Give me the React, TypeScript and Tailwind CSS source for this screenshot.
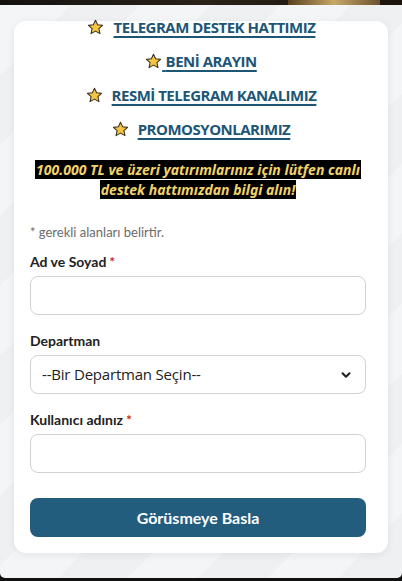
import { ChevronDown } from "lucide-react";

function Star() {
  return (
    <svg className="w-[17px] h-[17px] inline-block align-[-3px]" viewBox="0 0 24 24">
      <path
        d="M12 1.8l3 6.4 7 .8-5.2 4.7 1.5 7L12 17.1l-6.3 3.6 1.5-7L2 9l7-.8z"
        fill="#f6c443"
        stroke="#3a3222"
        strokeWidth={1.5}
        strokeLinejoin="round"
      />
    </svg>
  );
}

const links = [
  { label: "TELEGRAM DESTEK HATTIMIZ", gap: "mr-[10px]", underlineStar: false },
  { label: "BENİ ARAYIN", gap: "", underlineStar: true },
  { label: "RESMİ TELEGRAM KANALIMIZ", gap: "mr-[9px]", underlineStar: false },
  { label: "PROMOSYONLARIMIZ", gap: "mr-[9px]", underlineStar: false },
];

const linkCls =
  "text-[15px] font-bold tracking-[-0.5px] text-[#1d5675] underline underline-offset-[3px] decoration-[1.5px] leading-[20px] cursor-pointer font-['Open_Sans',sans-serif]";

function Field({ label, required }: { label: string; required?: boolean }) {
  return (
    <div className="flex flex-col">
      <label className="text-[14px] font-bold text-[#222] leading-[20px] mb-[4px]">
        {label}
        {required && <span className="text-[#c0302b] ml-[3px]">*</span>}
      </label>
      <input
        type="text"
        className="h-[39px] w-full rounded-[8px] border border-[#d2d2d2] bg-white px-3 outline-none"
      />
    </div>
  );
}

export default function App() {
  return (
    <div className="w-full h-[581px] bg-[#111] overflow-hidden font-['Lato',sans-serif]">
      <div className="h-[5px] bg-gradient-to-r from-[#141210] via-[#2a2219] to-[#1a140c] flex justify-end">
        <div className="w-[92px] h-full mr-[22px] bg-gradient-to-r from-[#5a4220] via-[#c9a866] to-[#6b5230]" />
      </div>
      <div className="h-[573px] rounded-b-[5px] bg-[#f1f2f3] bg-[linear-gradient(135deg,#f4f5f6_25%,#eff0f1_25%,#eff0f1_50%,#f4f5f6_50%,#f4f5f6_75%,#eff0f1_75%)] bg-[length:140px_140px] px-[14px] pt-[16px]">
        <div className="bg-white rounded-[12px] shadow-[0_2px_8px_rgba(0,0,0,0.07)] h-[532px] pl-[16px] pr-[22px]">
          <div className="flex flex-col items-center pl-[6px]">
            {links.map((l, i) => (
              <div key={l.label} className={`h-[34px] flex items-center ${i === 0 ? "-mt-[11px]" : ""}`}>
                {l.underlineStar ? (
                  <a className={linkCls}>
                    {" "}
                    <Star /> {l.label}
                  </a>
                ) : (
                  <>
                    <span className={l.gap}>
                      <Star />
                    </span>
                    <a className={linkCls}>{l.label}</a>
                  </>
                )}
              </div>
            ))}
          </div>

          <p className="mt-[14px] text-center text-[14px] font-bold italic leading-[20px] text-[#f2d36b] font-['Noto_Sans',sans-serif]">
            <span className="bg-black [box-decoration-break:clone] px-[1px]">
              100.000 TL ve üzeri yatırımlarınız için lütfen canlı destek hattımızdan bilgi alın!
            </span>
          </p>

          <p className="mt-[23px] text-[13px] text-[#6b6b6b] leading-[18px]">* gerekli alanları belirtir.</p>

          <div className="mt-[11px] flex flex-col gap-[16px]">
            <Field label="Ad ve Soyad" required />
            <div className="flex flex-col">
              <label className="text-[14px] font-bold text-[#222] leading-[20px] mb-[4px]">Departman</label>
              <div className="relative h-[39px] rounded-[8px] border border-[#d2d2d2] bg-white flex items-center pl-[11px]">
                <span className="text-[15px] tracking-[-0.2px] text-[#222] font-['Open_Sans',sans-serif]">
                  --Bir Departman Seçin--
                </span>
                <ChevronDown className="absolute right-[12px] w-[14px] h-[14px] text-[#222]" strokeWidth={3.5} />
              </div>
            </div>
            <Field label="Kullanıcı adınız" required />
          </div>

          <button className="mt-[25px] w-full h-[39px] rounded-[8px] bg-[#225d7e] text-white text-[16px] font-bold">
            Görüsmeye Basla
          </button>
        </div>
      </div>
    </div>
  );
}
